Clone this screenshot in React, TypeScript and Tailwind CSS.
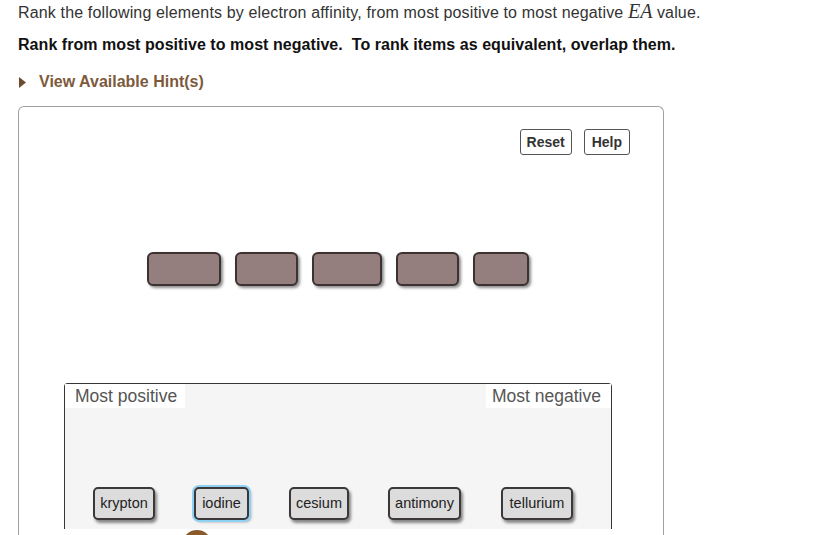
import React from 'react';

const slots = [74, 63, 70, 63, 56];

const items = [
  { name: 'krypton', ml: 'ml-[28px]', w: 'w-[62px]' },
  { name: 'iodine', ml: 'ml-[39px]', w: 'w-[55px]', active: true },
  { name: 'cesium', ml: 'ml-[40px]', w: 'w-[60px]' },
  { name: 'antimony', ml: 'ml-[39px]', w: 'w-[73px]' },
  { name: 'tellurium', ml: 'ml-[40px]', w: 'w-[72px]' },
];

const App: React.FC = () => {
  return (
    <div className="w-[838px] h-[535px] overflow-hidden bg-white font-['Liberation_Sans',Arial,sans-serif] text-[#333]">
      <div className="px-[18px]">
        <p className="pt-[1px] text-[16px] tracking-[0.15px] leading-[20px] text-[#333]">
          Rank the following elements by electron affinity, from most positive to most negative{' '}
          <span className="font-['Liberation_Serif',serif] italic text-[20px] tracking-normal">EA</span> value.
        </p>
        <p className="mt-[13px] text-[16px] tracking-[0.05px] leading-[18px] font-bold text-[#111]">
          Rank from most positive to most negative.&nbsp; To rank items as equivalent, overlap them.
        </p>
        <div className="mt-[19px] flex items-center gap-[13px] text-[#7d5a3c]">
          <svg width="7" height="11" viewBox="0 0 7 11" className="ml-[1px]">
            <polygon points="0,0 7,5.5 0,11" fill="#6b4a2e" />
          </svg>
          <span className="text-[16px] font-bold leading-[18px]">View Available Hint(s)</span>
        </div>

        <div className="mt-[15px] w-[646px] h-[440px] rounded-t-[6px] border border-[#a0a0a0] border-b-0">
          <div className="flex justify-end gap-[12px] pt-[22px] pr-[33px]">
            <button className="h-[26px] px-[6px] rounded-[3px] border border-[#555] bg-white text-[14px] font-bold text-[#333]">
              Reset
            </button>
            <button className="h-[26px] px-[7px] rounded-[3px] border border-[#555] bg-white text-[14px] font-bold text-[#333]">
              Help
            </button>
          </div>

          <div className="mt-[97px] ml-[128px] flex gap-[14px]">
            {slots.map((w, i) => (
              <div
                key={i}
                style={{ width: w }}
                className="h-[34px] rounded-[6px] border-2 border-[#3d3232] bg-[#957f7e] shadow-[2px_2px_3px_rgba(0,0,0,0.45)]"
              />
            ))}
          </div>

          <div className="mt-[97px] ml-[45px] w-[548px] h-[146px] relative rounded-t-[4px] border border-b-0 border-[#3a3535] bg-[#f5f5f5]">
            <div className="flex justify-between">
              <span className="bg-white pl-[10px] pr-[8px] text-[17.5px] leading-[24px] text-[#555]">Most positive</span>
              <span className="bg-white pl-[6px] pr-[10px] text-[17.5px] leading-[24px] text-[#555]">Most negative</span>
            </div>
            <div className="mt-[79px] flex">
              {items.map((it) => (
                <div
                  key={it.name}
                  className={`${it.ml} ${it.w} h-[33px] flex items-center justify-center rounded-[5px] border-2 border-[#3d3838] bg-[#dcdcdc] text-[14.5px] text-[#222] ${
                    it.active
                      ? 'shadow-[0_0_0_2px_#8fd0f5,2px_2px_3px_rgba(0,0,0,0.35)]'
                      : 'shadow-[2px_3px_3px_rgba(0,0,0,0.45)]'
                  }`}
                >
                  {it.name}
                </div>
              ))}
            </div>
            <div className="absolute left-[117px] top-[146px] w-[30px] h-[30px] rounded-full bg-[#8a5a2b]" />
          </div>
        </div>
      </div>
    </div>
  );
};

export default App;
